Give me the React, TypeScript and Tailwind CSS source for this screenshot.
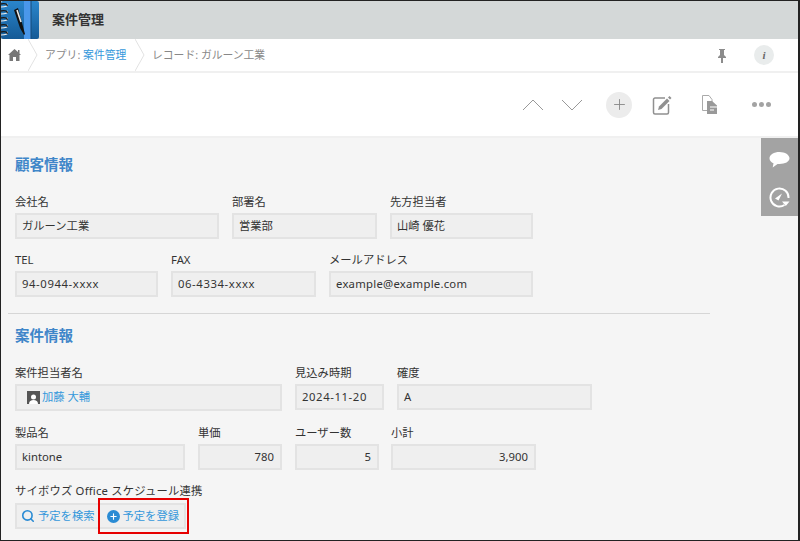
import { Search, Plus } from "lucide-react";

const font = { fontFamily: '"Noto Sans", "Noto Sans CJK JP", sans-serif' };

function Field({ label, value, width, right, valueClass = "" }: { label: string; value: string; width: string; right?: boolean; valueClass?: string }) {
  return (
    <div className={`flex flex-col ${width}`}>
      <div className="h-[19px] text-[11.3px] leading-[16px] text-[#333]">{label}</div>
      <div className={`h-[26px] flex items-center border-2 border-[#e3e3e3] bg-[#efefef] pl-[5px] pr-[6px] text-[11.3px] text-[#333] ${right ? "justify-end" : ""} ${valueClass}`}>
        {value}
      </div>
    </div>
  );
}

function AppIcon() {
  return (
    <svg width="39" height="38" viewBox="0 0 39 38" className="shrink-0">
      <defs>
        <linearGradient id="cover" x1="0" y1="0" x2="0" y2="1">
          <stop offset="0" stopColor="#2a86cc" />
          <stop offset="1" stopColor="#155a96" />
        </linearGradient>
      </defs>
      <rect x="0" y="0" width="38" height="38" rx="2" fill="url(#cover)" />
      <rect x="23" y="0" width="7" height="38" fill="#4a97ea" />
      <path d="M30 0v38" stroke="#174a78" />
      <path d="M13 9 L17 7 L24 33 L23 34 L19 27 Z" fill="#111" />
      <path d="M16 9 L20 21" stroke="#e8e8e8" strokeWidth="1.6" />
      {[3, 10, 17, 24, 31].map((y) => (
        <g key={y}>
          <path d={`M0 ${y + 3} C4 ${y + 3} 8 ${y + 2} 6 ${y}`} fill="none" stroke="#eee" strokeWidth="1.2" />
          <path d={`M0 ${y} C3 ${y - 1} 7 ${y} 6 ${y + 2}`} fill="none" stroke="#1a1a1a" strokeWidth="1.4" />
        </g>
      ))}
    </svg>
  );
}

function Chevron() {
  return (
    <svg width="11" height="33" viewBox="0 0 11 33" className="shrink-0">
      <path d="M0 0 L9 16 L0 32" fill="none" stroke="#e2e2e2" />
    </svg>
  );
}

export default function App() {
  return (
    <div className="w-[800px] h-[541px] overflow-hidden flex flex-col border border-r-2 border-[#222] bg-white" style={font}>
      {/* title bar */}
      <div className="h-[38px] bg-[#d4d8d8] flex items-center shrink-0">
        <AppIcon />
        <div className="ml-[12px] text-[13px] font-bold text-[#333]">案件管理</div>
      </div>

      {/* breadcrumb */}
      <div className="h-[34px] border-b-2 border-[#f0f0f0] flex items-center shrink-0 text-[10.8px] text-[#888]">
        <div className="w-[27px] flex justify-center">
          <svg width="13" height="12" viewBox="0 0 13 12">
            <path d="M6.500 0 L10 3V1h1.500v3.500L13 6h-1.500v6H8V8H5v4H1.500V6H0z" fill="#777" />
          </svg>
        </div>
        <Chevron />
        <div className="ml-[6px] w-[90px]">
          アプリ: <span className="text-[#3498db]">案件管理</span>
        </div>
        <Chevron />
        <div className="ml-[6px]">レコード: ガルーン工業</div>
        <div className="ml-auto flex items-center">
          <svg width="12" height="15" viewBox="0 0 12 15" className="mr-[26px]">
            <path d="M3 1h6v1H8v5l2 2v1H7v5H5v-5H2V9l2-2V2H3z" fill="#8c8c8c" />
          </svg>
          <div className="w-[20px] h-[20px] mr-[24px] rounded-full bg-[#e9ecec] flex items-center justify-center font-bold italic text-[11px] text-[#666]" style={{ fontFamily: '"Liberation Serif", serif' }}>
            i
          </div>
        </div>
      </div>

      {/* toolbar */}
      <div className="h-[65px] border-b-2 border-[#f0f0f0] flex items-center justify-end shrink-0">
        <svg width="22" height="12" viewBox="0 0 22 12">
          <path d="M1 11 L11 1 L21 11" fill="none" stroke="#999" />
        </svg>
        <svg width="22" height="12" viewBox="0 0 22 12" className="ml-[17px]">
          <path d="M1 1 L11 11 L21 1" fill="none" stroke="#999" />
        </svg>
        <div className="ml-[23px] w-[26px] h-[26px] rounded-full bg-[#ececec] flex items-center justify-center">
          <Plus size={17} strokeWidth={1.3} color="#888" />
        </div>
        <svg width="20" height="20" viewBox="0 0 20 20" className="ml-[20px]">
          <path d="M13 3H3a1.500 1.500 0 0 0-1.500 1.500v13A1.500 1.500 0 0 0 3 19h12a1.500 1.500 0 0 0 1.500-1.500V9" fill="none" stroke="#909090" strokeWidth="1.5" />
          <path d="M6 15l1-3.500L15 3.500l2.500 2.500L9.500 14z" fill="#909090" />
          <path d="M16 2.500l1.500-1.500 2 2L18 4.500z" fill="#909090" />
        </svg>
        <svg width="18" height="20" viewBox="0 0 18 20" className="ml-[29px]">
          <path d="M1.500 .5h6.500l3 4v11h-9.500z" fill="#fff" stroke="#aaa" />
          <path d="M6 6h5l5 4.500V19H6z" fill="#999" />
          <path d="M9 12h7M9 15h4" stroke="#fff" />
        </svg>
        <div className="ml-[33px] mr-[27px] flex gap-[2px]">
          <span className="w-[5px] h-[5px] rounded-full bg-[#a3a3a3]" />
          <span className="w-[5px] h-[5px] rounded-full bg-[#a3a3a3]" />
          <span className="w-[5px] h-[5px] rounded-full bg-[#a3a3a3]" />
        </div>
      </div>

      {/* record */}
      <div className="relative flex-1 bg-[#f5f5f5] pl-[14px] pt-[17px]">
        <div className="absolute right-0 top-0 w-[37px] h-[78px] bg-[#a3a3a3] flex flex-col items-center pt-[14px]">
          <svg width="21" height="16" viewBox="0 0 21 16">
            <path d="M10.500 0C5 0 .5 2.500 .5 6.300c0 2.400 1.700 4 4 5l-.8 4.200 4.800-3.500h2c5.500 0 10-2.300 10-5.700S16 0 10.500 0z" fill="#fff" />
          </svg>
          <svg width="21" height="21" viewBox="0 0 21 21" className="mt-[19px]">
            <path d="M15.500 18A9 9 0 1 1 19.500 11" fill="none" stroke="#fff" strokeWidth="2" />
            <path d="M6 11.500l7-5-3.500 7z" fill="#fff" />
            <path d="M13 14.500h7.500l-3.700 4.500z" fill="#fff" />
          </svg>
        </div>

        <div className="text-[14.5px] leading-[18px] font-bold text-[#3f86c9]">顧客情報</div>

        <div className="mt-[21px] flex gap-[13px]">
          <Field label="会社名" value="ガルーン工業" width="w-[204px]" />
          <Field label="部署名" value="営業部" width="w-[145px]" />
          <Field label="先方担当者" value="山崎 優花" width="w-[143px]" />
        </div>
        <div className="mt-[13px] flex gap-[13px]">
          <Field label="TEL" value="94-0944-xxxx" width="w-[143px]" valueClass="tracking-[0.6px]" />
          <Field label="FAX" value="06-4334-xxxx" width="w-[145px]" valueClass="tracking-[0.6px]" />
          <Field label="メールアドレス" value="example@example.com" width="w-[204px]" valueClass="tracking-[0.25px]" />
        </div>

        <div className="mt-[16px] -ml-[7px] w-[702px] border-t border-[#d6d6d6]" />

        <div className="mt-[12px] text-[14.5px] leading-[18px] font-bold text-[#3f86c9]">案件情報</div>

        <div className="mt-[21px] flex gap-[13px]">
          <div className="flex flex-col w-[267px]">
            <div className="h-[19px] text-[11.3px] leading-[16px] text-[#333]">案件担当者名</div>
            <div className="h-[27px] flex items-center border-2 border-[#e3e3e3] bg-[#efefef] pl-[10px] text-[11.3px] text-[#3498db]">
              <span className="w-[13px] h-[13px] bg-[#555] mr-[2px] flex items-end justify-center overflow-hidden">
                <svg width="11" height="11" viewBox="0 0 11 11">
                  <circle cx="5.500" cy="4" r="2.500" fill="#fff" />
                  <path d="M1 11c0-3 2-4 4.500-4S10 8 10 11z" fill="#fff" />
                </svg>
              </span>
              加藤 大輔
            </div>
          </div>
          <Field label="見込み時期" value="2024-11-20" width="w-[89px]" valueClass="tracking-[0.6px]" />
          <Field label="確度" value="A" width="w-[195px]" />
        </div>
        <div className="mt-[14px] flex gap-[13px]">
          <Field label="製品名" value="kintone" width="w-[170px]" />
          <Field label="単価" value="780" width="w-[84px]" right />
          <Field label="ユーザー数" value="5" width="w-[84px]" right />
          <Field label="小計" value="3,900" width="w-[145px] -ml-[1px]" right />
        </div>

        <div className="mt-[13px] h-[20px] text-[11.3px] leading-[16px] tracking-[0.2px] text-[#333]">サイボウズ Office スケジュール連携</div>
        <div className="relative inline-flex h-[26px] items-center border-2 border-[#e3e3e3] bg-[#efefef] text-[11.3px] text-[#3498db]">
          <Search size={14} strokeWidth={2.8} color="#2a8bd4" className="ml-[4px] mr-[3px]" />
          <span>予定を検索</span>
          <span className="ml-[12px] mr-[3px] w-[13px] h-[13px] rounded-full bg-[#2a8bd4] flex items-center justify-center">
            <Plus size={9} strokeWidth={3} color="#fff" />
          </span>
          <span className="mr-[5px]">予定を登録</span>
          <div className="absolute left-[81px] -top-[7px] w-[91px] h-[36px] border-2 border-[#e60000]" />
        </div>
      </div>
    </div>
  );
}
